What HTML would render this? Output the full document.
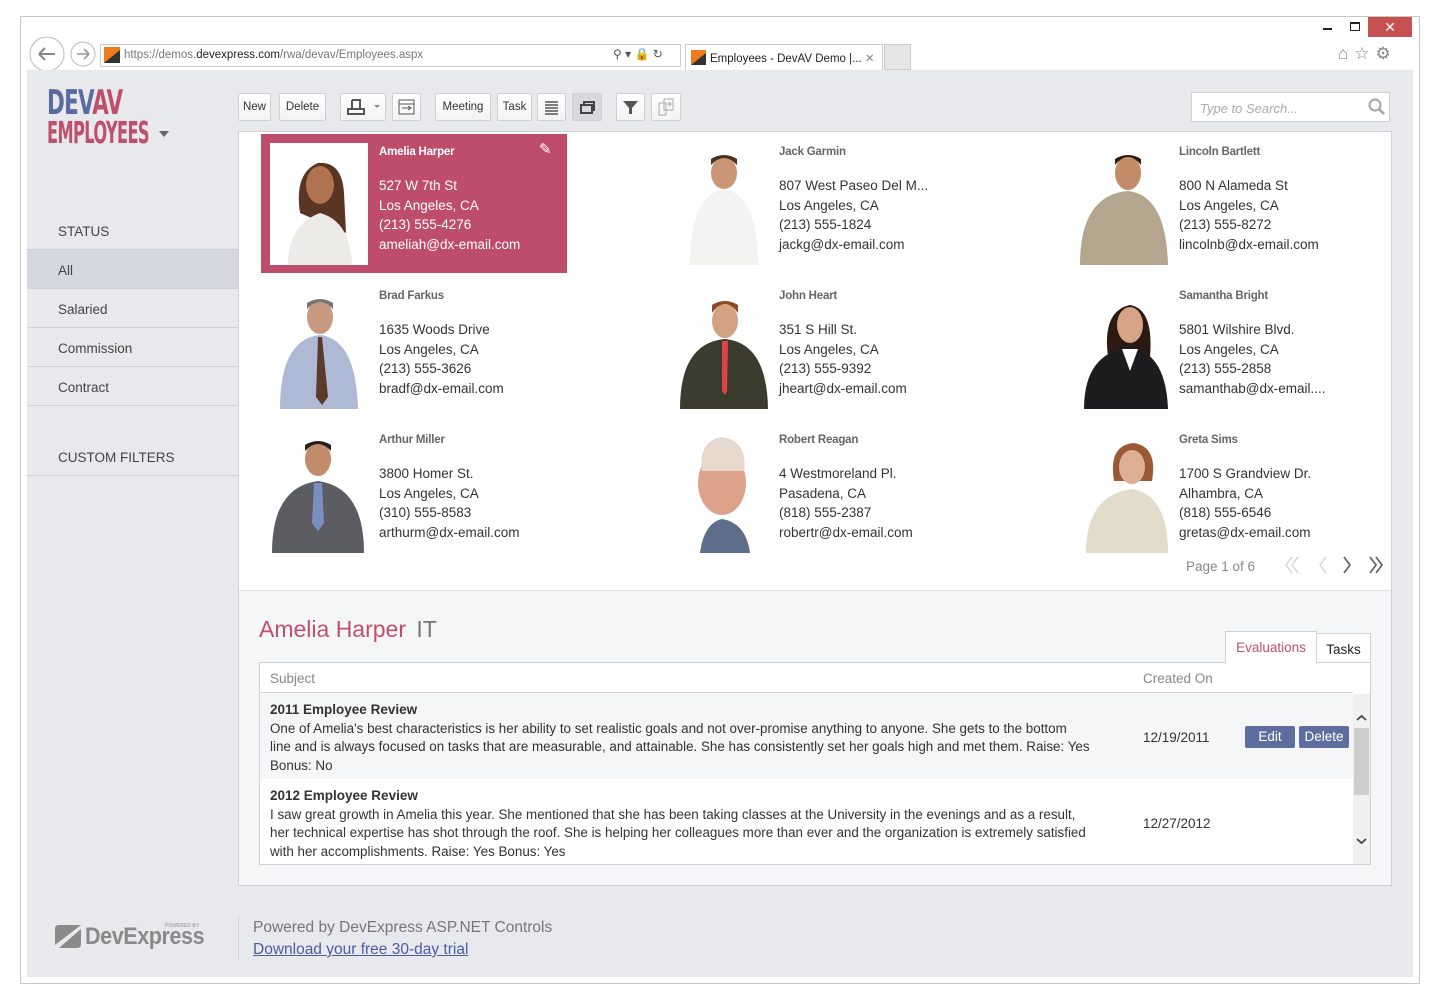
<!DOCTYPE html>
<html><head><meta charset="utf-8"><style>
*{box-sizing:border-box;margin:0;padding:0}
body{width:1440px;height:1000px;background:#fff;font-family:"Liberation Sans",sans-serif;position:relative;overflow:hidden;color:#333}
.a{position:absolute}
.btn{position:absolute;top:93px;height:28px;background:linear-gradient(#fff,#f3f3f3);border:1px solid #cfd0d4;border-radius:2px;font-size:11.5px;color:#333;text-align:center;line-height:27px}
.side{position:absolute;left:27px;width:211px;font-size:13.5px;color:#444;padding-left:31px;border-bottom:1px solid #cfd1d6}
.card{position:absolute;width:306px;height:139px}
.card .ph{position:absolute;left:9px;top:9px;width:98px;height:122px;background:#fff;overflow:hidden}
.card .nm{position:absolute;left:118px;top:12px;font-size:11.5px;font-weight:bold;color:#666;letter-spacing:-0.2px}
.card .ad{position:absolute;left:118px;top:42px;font-size:13.5px;line-height:19.7px;color:#333;white-space:nowrap}
.sel{background:#be4d6b}
.sel .nm,.sel .ad{color:#fff}
.row{position:absolute;left:260px;width:1093px;font-size:13.5px;line-height:18.5px;color:#333}
.row b{font-size:13.5px}
</style></head><body>
<div class="a" style="left:20px;top:16px;width:1400px;height:968px;border:1px solid #c6c6c6;background:#fff"></div>
<div class="a" style="left:1368px;top:17px;width:44px;height:20px;background:#c75050;color:#fff;font-size:14px;text-align:center;line-height:20px">✕</div>
<div class="a" style="left:1323px;top:28px;width:9px;height:2px;background:#222"></div>
<div class="a" style="left:1350px;top:22px;width:10px;height:9px;border:1px solid #222;border-top-width:2px"></div>
<svg class="a" style="left:28px;top:36px" width="70" height="36"><circle cx="19" cy="18" r="17" fill="#fff" stroke="#bbb"/><path d="M11 18h16M11 18l6-6M11 18l6 6" stroke="#888" stroke-width="2" fill="none"/><circle cx="55" cy="18" r="12" fill="#fff" stroke="#bbb"/><path d="M61 18h-12M61 18l-5-5M61 18l-5 5" stroke="#999" stroke-width="1.6" fill="none"/></svg>
<div class="a" style="left:100px;top:44px;width:581px;height:23px;border:1px solid #ccc;background:#fff"></div>
<svg class="a" style="left:104px;top:47px" width="16" height="16"><rect width="16" height="16" fill="#f07b1b"/><path d="M0 16L16 3V16Z" fill="#333"/></svg>
<div class="a" style="left:124px;top:49px;font-size:11.5px;color:#777">https://demos.<span style="color:#222">devexpress.com</span>/rwa/devav/Employees.aspx</div>
<div class="a" style="left:613px;top:47px;font-size:12px;color:#555">⚲ ▾ 🔒 ↻</div>
<div class="a" style="left:685px;top:44px;width:198px;height:26px;border:1px solid #ccc;border-bottom:none;background:#fff"></div>
<svg class="a" style="left:691px;top:50px" width="15" height="15"><rect width="15" height="15" fill="#f07b1b"/><path d="M0 15L15 3V15Z" fill="#333"/></svg>
<div class="a" style="left:710px;top:51px;font-size:11.5px;color:#222">Employees - DevAV Demo |... <span style="color:#888">✕</span></div>
<div class="a" style="left:884px;top:44px;width:27px;height:26px;border:1px solid #ccc;background:#e6e6e6"></div>
<div class="a" style="left:1338px;top:44px;font-size:17px;color:#888;letter-spacing:6px">⌂☆⚙</div>
<div class="a" style="left:27px;top:70px;width:1386px;height:907px;background:#e8e9ed"></div>
<div class="a" style="left:47px;top:85px;font-size:34px;line-height:36px;color:#5b6aa0;font-family:'DejaVu Sans Condensed','Liberation Sans Narrow',sans-serif;font-weight:bold;transform:scaleX(.7);transform-origin:left;letter-spacing:-1px">DEV<span style="color:#c04f6d">AV</span></div>
<div class="a" style="left:47px;top:118px;font-size:30px;line-height:32px;color:#c04f6d;font-family:'DejaVu Sans Condensed','Liberation Sans Narrow',sans-serif;font-weight:bold;transform:scaleX(.6);transform-origin:left;letter-spacing:-1px">EMPLOYEES</div>
<div class="a" style="left:159px;top:131px;width:0;height:0;border-left:5px solid transparent;border-right:5px solid transparent;border-top:6px solid #666"></div>
<div class="side" style="top:210px;height:40px;line-height:43px">STATUS</div>
<div class="side" style="top:250px;height:39px;line-height:41px;background:#d5d8e0">All</div>
<div class="side" style="top:289px;height:39px;line-height:41px">Salaried</div>
<div class="side" style="top:328px;height:39px;line-height:41px">Commission</div>
<div class="side" style="top:367px;height:39px;line-height:41px">Contract</div>
<div class="side" style="top:406px;height:70px;line-height:103px">CUSTOM FILTERS</div>
<div class="btn" style="left:238px;width:33px">New</div>
<div class="btn" style="left:279px;width:47px">Delete</div>
<div class="btn" style="left:340px;width:46px"><svg width="44" height="26"><path d="M11 6h8v9M11 6v9M7 15h16v5H7z" stroke="#555" stroke-width="2" fill="none"/><path d="M33 11l3 3 3-3z" fill="#888"/></svg></div>
<div class="btn" style="left:392px;width:29px"><svg width="27" height="26"><rect x="6" y="6" width="15" height="14" fill="none" stroke="#555"/><path d="M6 10h15M9 14h9M15 12l3 2-3 2" stroke="#555" fill="none"/></svg></div>
<div class="btn" style="left:435px;width:56px">Meeting</div>
<div class="btn" style="left:497px;width:35px">Task</div>
<div class="btn" style="left:537px;width:29px"><svg width="27" height="26"><path d="M7 8h13M7 11h13M7 14h13M7 17h13M7 20h13" stroke="#555" stroke-width="1.5"/></svg></div>
<div class="btn" style="left:572px;width:30px;background:#d8d9dc"><svg width="28" height="26"><rect x="8" y="11" width="11" height="8" fill="none" stroke="#444" stroke-width="2"/><path d="M11 11V8h10v8h-2" fill="none" stroke="#444" stroke-width="2"/></svg></div>
<div class="btn" style="left:616px;width:29px"><svg width="27" height="26"><path d="M6 7h15l-6 7v6h-3v-6z" fill="#555"/></svg></div>
<div class="btn" style="left:651px;width:30px"><svg width="28" height="26"><rect x="7" y="9" width="7" height="12" fill="none" stroke="#aaa"/><rect x="12" y="5" width="9" height="11" fill="none" stroke="#aaa"/><path d="M15 10h4M17 8l2 2-2 2" stroke="#aaa" fill="none"/></svg></div>
<div class="a" style="left:1191px;top:92px;width:199px;height:30px;background:#fff;border:1px solid #cfd0d4"></div>
<div class="a" style="left:1200px;top:101px;font-size:13px;font-style:italic;color:#aaa">Type to Search...</div>
<svg class="a" style="left:1367px;top:97px" width="20" height="20"><circle cx="8" cy="8" r="5.5" stroke="#aaa" stroke-width="2.2" fill="none"/><path d="M12 12l5 5" stroke="#aaa" stroke-width="3"/></svg>
<div class="a" style="left:238px;top:131px;width:1154px;height:755px;border:1px solid #cfd1d6;background:#f5f6f8"></div>
<div class="a" style="left:239px;top:132px;width:1152px;height:459px;background:#fff;border-bottom:1px solid #e3e4e8"></div>

<div class="card sel" style="left:261px;top:134px"><div class="ph"><svg width="98" height="122"><path d="M30 70q-6-40 18-50 24-2 26 30l2 40z" fill="#5a3524"/><ellipse cx="50" cy="42" rx="14" ry="19" fill="#b07250"/><path d="M18 122q0-40 32-52 30 8 32 52z" fill="#ecebe8"/></svg></div><div class="nm" style="color:#fff">Amelia Harper</div><div class="ad">527 W 7th St<br>Los Angeles, CA<br>(213) 555-4276<br>ameliah@dx-email.com</div><div class="a" style="left:278px;top:6px;color:#fff;font-size:15px">✎</div></div>
<div class="card" style="left:661px;top:134px"><div class="ph"><svg width="98" height="122"><ellipse cx="54" cy="30" rx="13" ry="16" fill="#c99574"/><path d="M41 22q13-14 26 0v-6q-13-8-26 0z" fill="#4a3020"/><path d="M20 122q0-70 34-76 34 6 34 76z" fill="#f3f3f1"/></svg></div><div class="nm">Jack Garmin</div><div class="ad">807 West Paseo Del M...<br>Los Angeles, CA<br>(213) 555-1824<br>jackg@dx-email.com</div></div>
<div class="card" style="left:1061px;top:134px"><div class="ph"><svg width="98" height="122"><ellipse cx="58" cy="30" rx="13" ry="17" fill="#c48b68"/><path d="M45 22q13-16 26 0v-6q-13-8-26 0z" fill="#2a1a10"/><path d="M10 122q0-70 48-74 38 4 40 74z" fill="#b3a58e"/></svg></div><div class="nm">Lincoln Bartlett</div><div class="ad">800 N Alameda St<br>Los Angeles, CA<br>(213) 555-8272<br>lincolnb@dx-email.com</div></div>
<div class="card" style="left:261px;top:278px"><div class="ph"><svg width="98" height="122"><ellipse cx="50" cy="30" rx="13" ry="17" fill="#c79a80"/><path d="M37 22q13-14 26 0v-6q-13-8-26 0z" fill="#777"/><path d="M10 122q0-70 40-74 36 4 38 74z" fill="#aeb9d6"/><path d="M48 50l4 0 6 60-6 8-6-8z" fill="#5a3a2a"/></svg></div><div class="nm">Brad Farkus</div><div class="ad">1635 Woods Drive<br>Los Angeles, CA<br>(213) 555-3626<br>bradf@dx-email.com</div></div>
<div class="card" style="left:661px;top:278px"><div class="ph"><svg width="98" height="122"><ellipse cx="55" cy="34" rx="13" ry="17" fill="#d3a283"/><path d="M42 26q13-18 26 0v-8q-13-8-26 0z" fill="#8a4a24"/><path d="M10 122q0-66 45-70 42 4 43 70z" fill="#3b3c2e"/><path d="M52 54h6l-1 50-2 4-3-4z" fill="#d44"/></svg></div><div class="nm">John Heart</div><div class="ad">351 S Hill St.<br>Los Angeles, CA<br>(213) 555-9392<br>jheart@dx-email.com</div></div>
<div class="card" style="left:1061px;top:278px"><div class="ph"><svg width="98" height="122"><path d="M38 70q-6-46 22-52 24 4 20 52z" fill="#2a1a12"/><ellipse cx="60" cy="38" rx="13" ry="18" fill="#d6a386"/><path d="M14 122q0-56 46-62 36 6 38 62z" fill="#1d1d1f"/><path d="M52 62l8 22 8-22z" fill="#fff"/></svg></div><div class="nm">Samantha Bright</div><div class="ad">5801 Wilshire Blvd.<br>Los Angeles, CA<br>(213) 555-2858<br>samanthab@dx-email....</div></div>
<div class="card" style="left:261px;top:422px"><div class="ph"><svg width="98" height="122"><ellipse cx="48" cy="28" rx="13" ry="17" fill="#c08c6c"/><path d="M35 20q13-14 26 0v-6q-13-8-26 0z" fill="#222"/><path d="M2 122q0-66 46-72 46 6 46 72z" fill="#5b5d63"/><path d="M44 52h8l2 40-6 8-6-8z" fill="#7a8fc0"/></svg></div><div class="nm">Arthur Miller</div><div class="ad">3800 Homer St.<br>Los Angeles, CA<br>(310) 555-8583<br>arthurm@dx-email.com</div></div>
<div class="card" style="left:661px;top:422px"><div class="ph"><svg width="98" height="122"><ellipse cx="52" cy="52" rx="24" ry="32" fill="#dca38a"/><path d="M32 40q-4-30 20-34 26 4 22 34" fill="#e6d8cc"/><path d="M30 122q4-30 22-34 24 4 28 34z" fill="#5d6d8a"/></svg></div><div class="nm">Robert Reagan</div><div class="ad">4 Westmoreland Pl.<br>Pasadena, CA<br>(818) 555-2387<br>robertr@dx-email.com</div></div>
<div class="card" style="left:1061px;top:422px"><div class="ph"><svg width="98" height="122"><path d="M44 50q-6-36 20-38 24 4 18 38z" fill="#9a5a36"/><ellipse cx="62" cy="36" rx="13" ry="17" fill="#ddb094"/><path d="M16 122q0-58 46-64 36 6 36 64z" fill="#e3dccd"/></svg></div><div class="nm">Greta Sims</div><div class="ad">1700 S Grandview Dr.<br>Alhambra, CA<br>(818) 555-6546<br>gretas@dx-email.com</div></div>

<div class="a" style="left:1186px;top:559px;font-size:13.5px;color:#888">Page 1 of 6</div>
<svg class="a" style="left:1284px;top:555px" width="100" height="20"><path d="M8 2l-6 8 6 8M14 2l-6 8 6 8" stroke="#d6d6d6" stroke-width="1.5" fill="none"/><path d="M42 2l-6 8 6 8" stroke="#d6d6d6" stroke-width="1.5" fill="none"/><path d="M60 2l6 8-6 8" stroke="#666" stroke-width="1.8" fill="none"/><path d="M86 2l6 8-6 8M92 2l6 8-6 8" stroke="#666" stroke-width="1.8" fill="none"/></svg>

<div class="a" style="left:259px;top:616px;font-size:23px;color:#c04f6d">Amelia Harper <span style="color:#777;margin-left:4px">IT</span></div>
<div class="a" style="left:1225px;top:631px;width:92px;height:33px;background:#fff;border:1px solid #cfd1d6;border-bottom:none;color:#c04f6d;font-size:13.5px;text-align:center;line-height:32px;z-index:2">Evaluations</div>
<div class="a" style="left:1316px;top:633px;width:55px;height:30px;background:#fff;border:1px solid #cfd1d6;font-size:13.5px;text-align:center;line-height:31px;color:#222">Tasks</div>
<div class="a" style="left:259px;top:662px;width:1112px;height:203px;background:#fff;border:1px solid #cfd1d6"></div>
<div class="a" style="left:260px;top:663px;width:1093px;height:30px;border-bottom:1px solid #cfd1d6"></div>
<div class="a" style="left:270px;top:671px;font-size:13.5px;color:#888">Subject</div>
<div class="a" style="left:1143px;top:671px;font-size:13.5px;color:#888">Created On</div>
<div class="a" style="left:260px;top:694px;width:1093px;height:85px;background:#f5f6f8"></div>
<div class="row" style="top:701px;padding-left:10px;font-size:13.4px"><b>2011 Employee Review</b><br>One of Amelia's best characteristics is her ability to set realistic goals and not over-promise anything to anyone. She gets to the bottom<br>line and is always focused on tasks that are measurable, and attainable. She has consistently set her goals high and met them. Raise: Yes<br>Bonus: No</div>
<div class="a" style="left:1143px;top:730px;font-size:13.5px;color:#333">12/19/2011</div>
<div class="a" style="left:1245px;top:726px;width:50px;height:22px;background:#5f6c9e;border-radius:2px;color:#fff;font-size:13.5px;text-align:center;line-height:21px">Edit</div>
<div class="a" style="left:1299px;top:726px;width:50px;height:22px;background:#5f6c9e;border-radius:2px;color:#fff;font-size:13.5px;text-align:center;line-height:21px">Delete</div>
<div class="row" style="top:787px;padding-left:10px;font-size:13.4px"><b>2012 Employee Review</b><br>I saw great growth in Amelia this year. She mentioned that she has been taking classes at the University in the evenings and as a result,<br>her technical expertise has shot through the roof. She is helping her colleagues more than ever and the organization is extremely satisfied<br>with her accomplishments. Raise: Yes Bonus: Yes</div>
<div class="a" style="left:1143px;top:816px;font-size:13.5px;color:#333">12/27/2012</div>
<div class="a" style="left:1353px;top:694px;width:17px;height:170px;background:#f0f0f0"></div>
<div class="a" style="left:1354px;top:728px;width:15px;height:67px;background:#cdcdcd"></div>
<svg class="a" style="left:1353px;top:708px" width="17" height="145"><path d="M4 12l4.5-4 4.5 4" stroke="#444" stroke-width="1.8" fill="none"/><path d="M4 131l4.5 4 4.5-4" stroke="#444" stroke-width="1.8" fill="none"/></svg>

<svg class="a" style="left:55px;top:925px" width="26" height="23"><path d="M4 0h22L0 20V4q0-4 4-4z" fill="#8a8a8a"/><path d="M26 4v15q0 4-4 4H4z" fill="#8a8a8a"/></svg>
<div class="a" style="left:85px;top:923px;font-size:24px;font-weight:bold;color:#8a8a8a;letter-spacing:-0.5px;transform:scaleX(.9);transform-origin:left">DevExpress</div>
<div class="a" style="left:165px;top:923px;font-size:5px;color:#aaa;font-weight:bold">POWERED BY</div>
<div class="a" style="left:238px;top:916px;width:1px;height:44px;background:#d0d0d0"></div>
<div class="a" style="left:253px;top:919px;font-size:15.5px;color:#777">Powered by DevExpress ASP.NET Controls</div>
<div class="a" style="left:253px;top:941px;font-size:15.5px;color:#4a5d9e;text-decoration:underline">Download your free 30-day trial</div>
</body></html>
